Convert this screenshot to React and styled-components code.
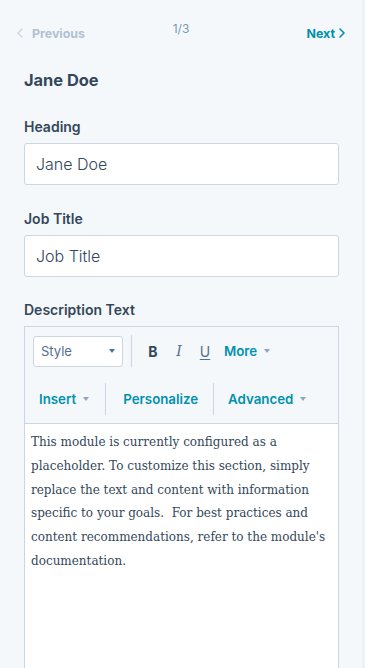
import React from "react";
import styled, { createGlobalStyle } from "styled-components";

const Global = createGlobalStyle`
  html, body { margin: 0; padding: 0; }
  body {
    background: #f5f8fa;
    font-family: "Inter", "Lato", sans-serif;
    color: #33475b;
  }
  * { box-sizing: border-box; }
`;

const Page = styled.div`
  height: 668px;
  overflow: hidden;
  background: #f5f8fa;
  border-right: 3px solid #edf1f5;
  display: flex;
  flex-direction: column;
`;

const Nav = styled.div`
  display: grid;
  grid-template-columns: 1fr auto 1fr;
  align-items: start;
  padding: 22px 17px 0 17px;
  height: 44px;
`;

const NavLink = styled.span`
  display: inline-flex;
  align-items: center;
  gap: ${(p) => (p.$next ? "4px" : "9px")};
  justify-self: ${(p) => (p.$next ? "end" : "start")};
  height: 22px;
  font-size: 12.4px;
  font-weight: 700;
  color: ${(p) => (p.$disabled ? "#b0c1d4" : "#0091ae")};
`;

const Counter = styled.span`
  font-size: 12px;
  line-height: 14px;
  color: #7c98b6;
`;

const Content = styled.div`
  padding: 0 23px 0 24px;
  display: flex;
  flex-direction: column;
  flex: 1;
`;

const Title = styled.h2`
  margin: 26px 0 0;
  font-size: 16.4px;
  line-height: 20px;
  font-weight: 700;
  color: #33475b;
`;

const Label = styled.label`
  display: block;
  margin: ${(p) => p.$top}px 0 6px;
  font-size: 14px;
  line-height: 20px;
  font-weight: 600;
  color: #33475b;
`;

const Input = styled.div`
  height: 42px;
  background: #fff;
  border: 1px solid #cbd6e2;
  border-radius: 3px;
  padding: 0 11px;
  display: flex;
  align-items: center;
  font-size: 16px;
  font-weight: 300;
  color: #33475b;
`;

const Editor = styled.div`
  flex: 1;
  display: flex;
  flex-direction: column;
  border: 1px solid #cbd6e2;
  border-bottom: none;
  background: #fff;
`;

const Toolbar = styled.div`
  background: #f5f8fa;
  border-bottom: 1px solid #cbd6e2;
  padding: 8px;
  display: flex;
  flex-direction: column;
  gap: 16px;
`;

const ToolRow = styled.div`
  display: flex;
  align-items: center;
  height: 32px;
`;

const Select = styled.div`
  width: 90px;
  height: 31px;
  flex: none;
  background: #fff;
  border: 1px solid #cbd6e2;
  border-radius: 3px;
  display: flex;
  align-items: center;
  padding: 0 7px 0 7px;
  font-size: 13px;
  color: #516f90;
`;

const SelectText = styled.span`
  flex: 1;
`;

const Divider = styled.span`
  width: 1px;
  align-self: stretch;
  background: #cbd6e2;
  margin: 0 ${(p) => p.$m || 9}px;
`;

const IconBtn = styled.span`
  width: 26px;
  display: flex;
  justify-content: center;
  align-items: center;
  font-size: 14px;
  color: ${(p) => p.$color || "#516f90"};
  font-weight: ${(p) => p.$weight || 400};
  font-style: ${(p) => (p.$italic ? "italic" : "normal")};
  font-family: ${(p) => (p.$serif ? '"DejaVu Serif", serif' : '"Inter", sans-serif')};
  text-decoration: ${(p) => (p.$underline ? "underline" : "none")};
  text-underline-offset: 2px;
`;

const MenuBtn = styled.span`
  display: inline-flex;
  align-items: center;
  gap: 7px;
  padding: 0 ${(p) => p.$pad || 6}px;
  font-size: 13.3px;
  font-weight: 600;
  color: #0091ae;
`;

const Caret = styled.span`
  flex: none;
  width: 0;
  height: 0;
  border-left: 3.5px solid transparent;
  border-right: 3.5px solid transparent;
  border-top: 4px solid ${(p) => p.$color || "#8fa6bd"};
`;

const Body = styled.div`
  flex: 1;
  padding: 7px 6px 0 6px;
  font-family: "DejaVu Serif", "Liberation Serif", serif;
  font-size: 12px;
  line-height: 23.8px;
  color: #33475b;
`;

const Chevron = ({ dir, color, w = 1.5 }) => (
  <svg width="6" height="10" viewBox="0 0 6 10" fill="none">
    <path
      d={dir === "left" ? "M5 1L1 5l4 4" : "M1 1l4 4-4 4"}
      stroke={color}
      strokeWidth={w}
      strokeLinecap="round"
      strokeLinejoin="round"
    />
  </svg>
);

export default function App() {
  return (
    <>
      <Global />
      <Page>
        <Nav>
          <NavLink $disabled>
            <Chevron dir="left" color="#cbd6e2" w={1.3} />
            Previous
          </NavLink>
          <Counter>1/3</Counter>
          <NavLink $next>
            Next
            <Chevron dir="right" color="#0091ae" w={1.6} />
          </NavLink>
        </Nav>
        <Content>
          <Title>Jane Doe</Title>
          <Label $top={27}>Heading</Label>
          <Input>Jane Doe</Input>
          <Label $top={24}>Job Title</Label>
          <Input>Job Title</Input>
          <Label $top={23}>Description Text</Label>
          <Editor>
            <Toolbar>
              <ToolRow>
                <Select>
                  <SelectText>Style</SelectText>
                  <Caret $color="#516f90" />
                </Select>
                <Divider $m={8} />
                <IconBtn $weight={700} $color="#33475b">B</IconBtn>
                <IconBtn $italic $serif>I</IconBtn>
                <IconBtn $underline>U</IconBtn>
                <MenuBtn>
                  More
                  <Caret />
                </MenuBtn>
              </ToolRow>
              <ToolRow>
                <MenuBtn>
                  Insert
                  <Caret />
                </MenuBtn>
                <Divider $m={10} />
                <MenuBtn $pad={7}>Personalize</MenuBtn>
                <Divider $m={8} />
                <MenuBtn>
                  Advanced
                  <Caret />
                </MenuBtn>
              </ToolRow>
            </Toolbar>
            <Body>
              This module is currently configured as a<br />
              placeholder. To customize this section, simply<br />
              replace the text and content with information<br />
              specific to your goals.&nbsp; For best practices and<br />
              content recommendations, refer to the module's<br />
              documentation.
            </Body>
          </Editor>
        </Content>
      </Page>
    </>
  );
}
